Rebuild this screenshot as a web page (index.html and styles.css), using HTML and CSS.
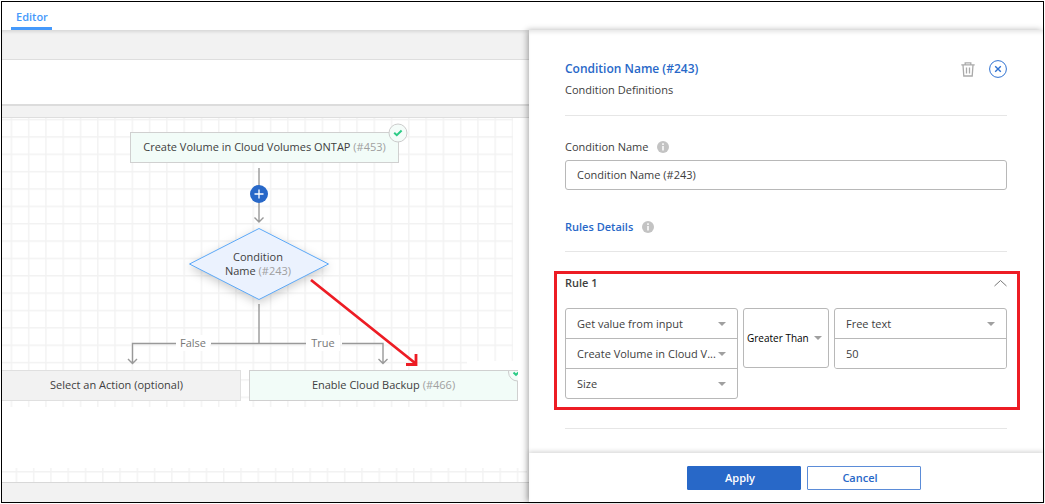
FILE: index.html
```html
<!DOCTYPE html>
<html lang="en">
<head>
<meta charset="utf-8">
<meta name="viewport" content="width=device-width, initial-scale=1">
<title>Editor</title>
<link rel="stylesheet" href="styles.css">
</head>
<body>
<div class="app">
  <nav class="tabs"><a class="tab" href="#editor">Editor</a></nav>
  <div class="workspace">
    <main class="editor" id="editor">
      <div class="strip strip-top"></div>
      <div class="toolbar"></div>
      <div class="strip strip-mid"></div>
      <div class="canvas">
        <svg class="drawing" width="527" height="365" viewBox="0 0 527 365" aria-hidden="true">
          <defs>
            <pattern id="grid" x="8.600" y=".800" width="17.28" height="17.36" patternUnits="userSpaceOnUse">
              <path d="M.8 0V17.36M0 .8H17.28" stroke="#f2f2f2" stroke-width="1.4" fill="none"/>
            </pattern>
            <pattern id="grid-low" x="13.6" y="353" width="17.28" height="17.36" patternUnits="userSpaceOnUse">
              <path d="M.8 0V17.36M0 .8H17.28" stroke="#f2f2f2" stroke-width="1.4" fill="none"/>
            </pattern>
          </defs>
          <path d="M0 0H511V243H465V289H0Z" fill="url(#grid)"/>
          <path d="M0 350H525V365H0Z" fill="url(#grid-low)"/>
          <g stroke="#999" stroke-width="1.4" fill="none">
            <path d="M257 50V104M252.500 99.500l4.500 4.500 4.500-4.500"/>
            <path d="M257 186V225.500M174 225.500H130.500V245.500M126 241l4.500 4.500 4.500-4.500M209 225.500H305M340 225.500H381V245.500M376.500 241l4.500 4.500 4.500-4.500"/>
          </g>
          <circle cx="257" cy="76" r="9" fill="#2868c8"/>
          <path d="M252.500 76h9M257 71.500v9" stroke="#fff" stroke-width="1.300"/>
          <path class="diamond" d="M257 110.500L326.500 146 257 181.500 187.500 146Z" fill="#ebf2fe" stroke="#5ba8f8"/>
        </svg>
        <div class="node node-create"><span>Create Volume in Cloud Volumes ONTAP <span class="id">(#453)</span></span></div>
        <svg class="badge" width="20" height="20" viewBox="0 0 20 20" aria-hidden="true"><circle cx="10" cy="10" r="9" fill="#f4fcf9" stroke="#ccc"/><path d="M6.200 9.700l2.600 2.500 4.800-4.700" fill="none" stroke="#2bcb86" stroke-width="2"/></svg>
        <div class="condition">Condition<br>Name <span class="id">(#243)</span></div>
        <div class="branch branch-false">False</div>
        <div class="branch branch-true">True</div>
        <div class="node node-select">Select an Action (optional)</div>
        <div class="node node-backup"><span>Enable Cloud Backup <span class="id">(#466)</span></span>
          <svg class="badge-cut" width="10" height="11" viewBox="0 0 10 11" aria-hidden="true"><circle cx="9.500" cy="1" r="9" fill="#f4fcf9" stroke="#ccc"/><path d="M5.500 1.500l2.500 2.300L10.500 1.500" fill="none" stroke="#2bcb86" stroke-width="2"/></svg>
        </div>
        <svg class="drawing" width="527" height="365" viewBox="0 0 527 365" aria-hidden="true"><path d="M309 162L413 245M404 246.500h10V236" fill="none" stroke="#ed1c24" stroke-width="2.800"/></svg>
      </div>
      <div class="strip strip-bottom"></div>
    </main>
    <form class="panel">
      <div class="content">
        <header class="head">
          <div class="head-row">
            <h1 class="title">Condition Name (#243)</h1>
            <button class="icon-button" type="button" aria-label="Delete"><svg width="14" height="15" viewBox="0 0 14 15" fill="none" stroke="#aaa" stroke-width="1.300"><path d="M.3 2.800h13.400M4.200 2.800V.800h5.600v2M2 3l.8 11h8.400L12 3M5.500 5.500v6M8.500 5.500v6"/></svg></button>
            <button class="icon-button" type="button" aria-label="Close"><svg width="18" height="18" viewBox="0 0 18 18" fill="none" stroke="#2e71d1"><circle cx="9" cy="9" r="8.400"/><path d="M6.200 6.200l5.600 5.600M11.800 6.200l-5.600 5.600" stroke-width="1.400"/></svg></button>
          </div>
          <p class="subtitle">Condition Definitions</p>
        </header>
        <div class="label-row">
          <label for="name">Condition Name</label>
          <svg width="12" height="12" viewBox="0 0 12 12" aria-hidden="true"><circle cx="6" cy="6" r="6" fill="#c3c3c3"/><path d="M6 2.300v1.600M6 5v4.500" stroke="#fff" stroke-width="1.500"/></svg>
        </div>
        <input class="text name" id="name" type="text" value="Condition Name (#243)">
        <div class="rules-head">
          <h2 class="rules-title">Rules Details</h2>
          <svg width="12" height="12" viewBox="0 0 12 12" aria-hidden="true"><circle cx="6" cy="6" r="6" fill="#c3c3c3"/><path d="M6 2.300v1.600M6 5v4.500" stroke="#fff" stroke-width="1.500"/></svg>
        </div>
        <section class="rule">
          <div class="rule-head">
            <h3 class="rule-title">Rule 1</h3>
            <button class="icon-button" type="button" aria-label="Collapse rule"><svg width="13" height="8" viewBox="0 0 13 8" fill="none" stroke="#777"><path d="M.5 7l6-5.500 6 5.500"/></svg></button>
          </div>
          <div class="fields">
            <div class="stack">
              <select class="pick" aria-label="Value source"><option>Get value from input</option></select>
              <select class="pick" aria-label="Action"><option>Create Volume in Cloud V...</option></select>
              <select class="pick" aria-label="Property"><option>Size</option></select>
            </div>
            <div class="stack"><select class="pick operator" aria-label="Operator"><option>Greater Than</option></select></div>
            <div class="stack">
              <select class="pick" aria-label="Value type"><option>Free text</option></select>
              <input class="text value" type="text" aria-label="Value" value="50">
            </div>
          </div>
        </section>
        <hr class="end">
      </div>
      <footer class="actions">
        <button class="button primary" type="submit">Apply</button>
        <button class="button" type="button">Cancel</button>
      </footer>
    </form>
  </div>
</div>
</body>
</html>
```
FILE: styles.css
```css
* { box-sizing: border-box; }
body { margin: 0; padding: 1px; background: #fff; color: #404040; font: 11px/16px "Open Sans", "Noto Sans", sans-serif; }
h1, h2, h3, p { margin: 0; }
button, input, select { font: inherit; color: inherit; }
.app { display: flex; flex-direction: column; min-height: calc(100vh - 2px); border: 1px solid #000; }
.tabs { display: flex; height: 28px; padding-left: 9px; }
.tab { padding: 7px 4px 0 5px; border-bottom: 3px solid #4599fb; color: #4599fb; font-weight: 600; font-size: 11px; text-decoration: none; }
.workspace { flex: 1; display: grid; grid-template-columns: minmax(0, 527fr) minmax(0, 514fr); }
.editor { display: flex; flex-direction: column; min-width: 0; }
.strip { background: #f2f2f2; }
.strip-top { height: 30px; border-bottom: 1px solid #dedede; box-shadow: inset 0 3px 3px -1px #d8d8d8; }
.toolbar { height: 44px; }
.strip-mid { height: 14px; border-top: 2px solid #dcdcdc; border-bottom: 1px solid #dedede; }
.strip-bottom { height: 20px; border-top: 1px solid #d8d8d8; }
.canvas { position: relative; flex: 1; min-height: 364px; overflow: hidden; }
.drawing { position: absolute; left: 0; top: 0; }
.diamond { filter: drop-shadow(0 3px 5px rgba(0, 0, 0, .2)); }
.node { position: absolute; display: flex; align-items: center; justify-content: center; height: 31px; padding-bottom: 1px; border: 1px solid #d0d0d0; background: #f2fcf8; white-space: nowrap; }
.id { color: #a0a0a0; }
.node-create { left: 128px; top: 14px; width: 269px; }
.badge { position: absolute; left: 386px; top: 5px; }
.condition { position: absolute; left: 206px; top: 132px; width: 100px; line-height: 14px; text-align: center; }
.branch { position: absolute; top: 217px; width: 34px; background: #fff; color: #777; text-align: center; }
.branch-false { left: 174px; }
.branch-true { left: 304px; }
.node-select { left: -10px; top: 252px; width: 249px; background: #f2f2f2; border-color: #e0e0e0; }
.node-backup { left: 247px; top: 252px; width: 269px; }
.badge-cut { position: absolute; right: -1px; top: 0; }
.panel { position: relative; display: flex; flex-direction: column; min-width: 0; background: #fff; box-shadow: -2px 0 6px rgba(0, 0, 0, .3), inset 0 4px 4px -2px #e4e4e4; }
.content { flex: 1; padding: 30px 36px 0; }
.head { height: 56px; border-bottom: 1px solid #e6e6e6; }
.head-row { display: flex; align-items: center; gap: 14px; height: 18px; }
.title { flex: 1; color: #2868c8; font-size: 12px; font-weight: 600; }
.subtitle { padding-top: 4px; }
.icon-button { display: flex; padding: 0; border: 0; background: none; }
.label-row { display: flex; align-items: center; gap: 9px; padding: 23px 0 5px; }
.text { display: block; width: 100%; height: 30px; padding: 0 11px 1px; border: 1px solid #b8b8b8; border-radius: 3px; background: #fff; outline: 0; }
.rules-head { display: flex; align-items: center; gap: 9px; height: 62px; padding-top: 13px; border-bottom: 1px solid #e6e6e6; }
.rules-title { color: #2868c8; font-size: 11px; font-weight: 600; }
.rule { margin: 19px -13px 0 -11px; padding: 0 10px 8px 8px; border: 3px solid #ed1c24; }
.rule-head { display: flex; justify-content: space-between; align-items: center; height: 18px; }
.rule-title { font-size: 11px; font-weight: 600; }
.fields { display: grid; grid-template-columns: minmax(0, 173fr) minmax(0, 86fr) minmax(0, 173fr); align-items: start; gap: 5px; padding-top: 16px; }
.stack { display: flex; flex-direction: column; border: 1px solid #b8b8b8; border-radius: 3px; overflow: hidden; }
.pick { appearance: none; width: 100%; height: 30px; padding: 0 20px 0 11px; border: 0; border-radius: 0; outline: 0; background: url("data:image/svg+xml,%3Csvg xmlns='http://www.w3.org/2000/svg' width='8' height='4'%3E%3Cpath d='M0 0h8L4 4z' fill='%23a0a0a0'/%3E%3C/svg%3E") no-repeat right 11px center; }
.pick:first-child { height: 29px; }
.pick + .pick, .value { border: 0; border-top: 1px solid #b8b8b8; border-radius: 0; }
.pick.operator { height: 58px; padding: 0 14px 0 3px; background-position: right 6px center; color: #000; font-size: 10px; }
.end { margin: 18px 0 24px; border: 0; border-top: 1px solid #e6e6e6; }
.actions { display: flex; justify-content: center; gap: 6px; height: 49px; padding: 13px 0 12px 36px; box-shadow: 0 -2px 4px rgba(0, 0, 0, .14); }
.button { width: 114px; height: 24px; padding: 0 8px 0 0; border: 1px solid #5b8cd8; border-radius: 1px; background: #fff; color: #2868c8; font-weight: 600; }
.primary { border-color: #2868c8; background: #2868c8; color: #fff; }
```
